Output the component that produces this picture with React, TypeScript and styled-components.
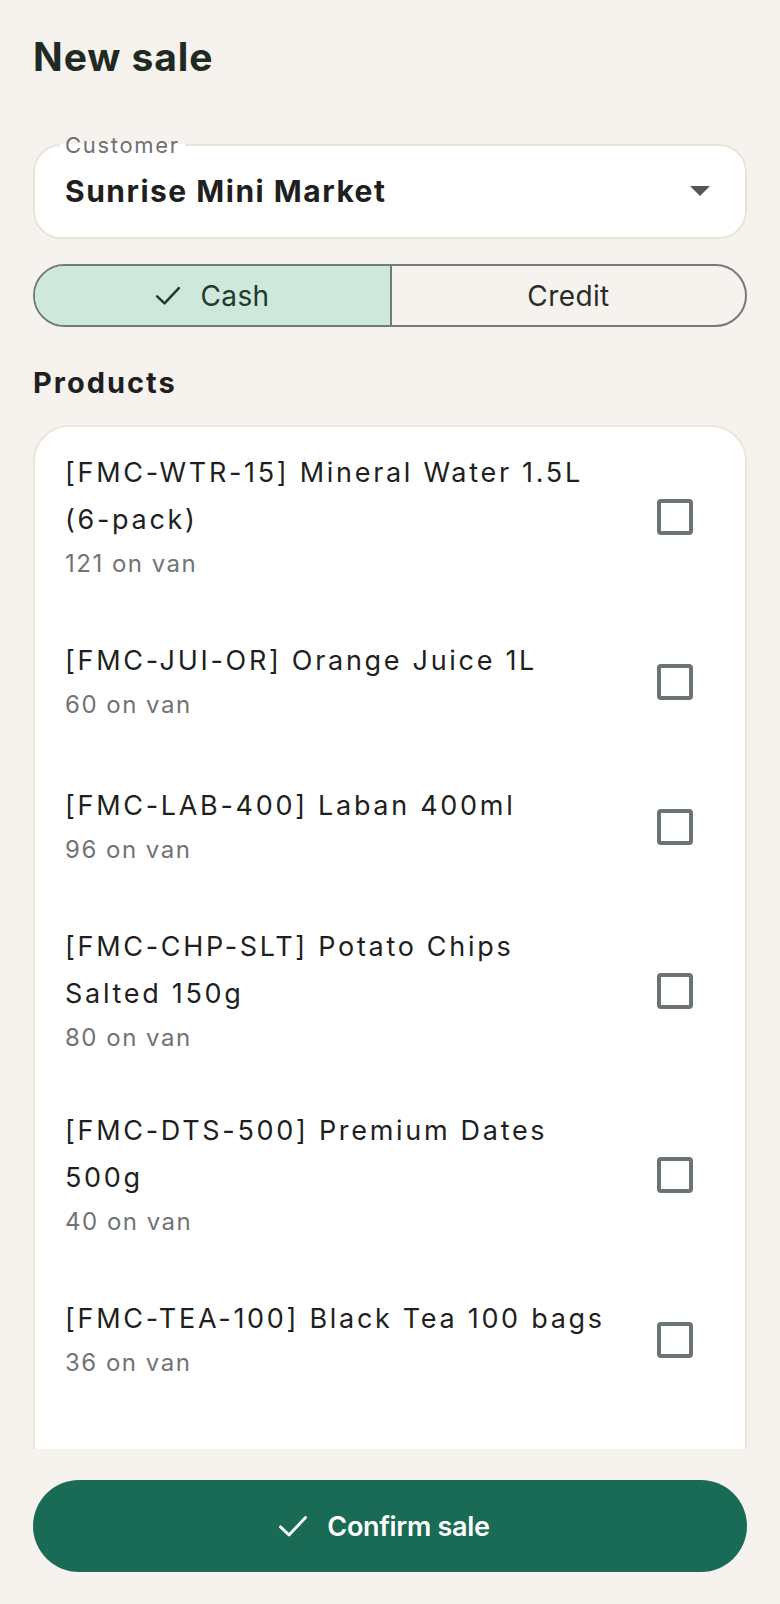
import React from 'react';
import styled, { createGlobalStyle } from 'styled-components';

const GlobalStyle = createGlobalStyle`
  html, body {
    margin: 0;
    padding: 0;
    background: #f6f3ee;
    font-family: Inter, "Noto Sans", sans-serif;
  }
  * { box-sizing: border-box; }
`;

const Page = styled.div`
  display: flex;
  flex-direction: column;
  height: 100vh;
  padding: 0 33px 32px;
  background: #f6f3ee;
`;

const Title = styled.h1`
  margin: 34px 0 0;
  font-size: 39px;
  line-height: 46px;
  font-weight: 700;
  letter-spacing: 0.9px;
  color: #1f2a22;
`;

const Field = styled.fieldset`
  margin: 55px 0 0;
  padding: 0 30px 10px;
  border: 2px solid #e9e3d8;
  border-radius: 28px;
  background: #fff;
`;

const FieldLabel = styled.legend`
  padding: 0 5px;
  margin-left: -5px;
  font-size: 22px;
  line-height: 20px;
  letter-spacing: 1.7px;
  color: #6d726e;
`;

const FieldRow = styled.div`
  height: 72px;
  display: flex;
  align-items: center;
  justify-content: space-between;
`;

const FieldValue = styled.div`
  font-size: 30px;
  font-weight: 700;
  letter-spacing: 1.5px;
  color: #1e1f1e;
`;

const Caret = styled.span`
  width: 0;
  height: 0;
  border-left: 10px solid transparent;
  border-right: 10px solid transparent;
  border-top: 10px solid #555;
  margin-right: 5px;
`;

const Segmented = styled.div`
  margin-top: 25px;
  display: grid;
  grid-template-columns: 1fr 1fr;
  height: 63px;
  border: 2px solid #727c76;
  border-radius: 999px;
  overflow: hidden;
`;

const Segment = styled.button<{ $active?: boolean }>`
  display: flex;
  align-items: center;
  justify-content: center;
  gap: 19px;
  border: none;
  border-left: ${(p) => (p.$active ? 'none' : '2px solid #727c76')};
  background: ${(p) => (p.$active ? '#cfe8dc' : 'transparent')};
  color: ${(p) => (p.$active ? '#24392e' : '#2a2c2b')};
  font-family: inherit;
  font-size: 28px;
  letter-spacing: 0.4px;
  padding: 0;
`;

const SectionTitle = styled.h2`
  margin: 39px 0 0;
  font-size: 29px;
  line-height: 34px;
  font-weight: 700;
  letter-spacing: 2px;
  color: #1e1f1e;
`;

const ListViewport = styled.div`
  flex: 1;
  min-height: 0;
  overflow: hidden;
  margin-top: 25px;
`;

const ListCard = styled.ul`
  margin: 0;
  padding: 0;
  list-style: none;
  background: #fff;
  border: 2px solid #ebe5da;
  border-radius: 36px;
`;

const Row = styled.li`
  display: flex;
  align-items: center;
  gap: 45px;
  min-height: 145px;
  padding: 22px 52px 26px 30px;
`;

const RowText = styled.div`
  flex: 1;
  min-width: 0;
`;

const RowTitle = styled.div`
  font-size: 27px;
  line-height: 47px;
  letter-spacing: 2.7px;
  color: #1e1f1e;
`;

const RowSub = styled.div`
  font-size: 24px;
  line-height: 42px;
  letter-spacing: 1.5px;
  color: #6f7571;
`;

const Checkbox = styled.span`
  flex: none;
  width: 36px;
  height: 36px;
  border: 4px solid #6b7470;
  border-radius: 4px;
`;

const Footer = styled.div`
  padding-top: 31px;
`;

const ConfirmButton = styled.button`
  width: 100%;
  height: 92px;
  border: none;
  border-radius: 46px;
  background: #1a6b55;
  color: #fff;
  display: flex;
  align-items: center;
  justify-content: center;
  gap: 19px;
  padding: 0 12px 0 0;
  font-family: inherit;
  font-size: 27px;
  font-weight: 600;
  letter-spacing: -0.3px;
`;

const Check = ({ color, width }: { color: string; width: number }) => (
  <svg width={width} height={(width * 18) / 24} viewBox="0 0 24 18" fill="none">
    <path d="M2 9.5l6.8 6.5L22 2" stroke={color} strokeWidth="2.3" strokeLinecap="round" strokeLinejoin="round" />
  </svg>
);

const products = [
  { name: '[FMC-WTR-15] Mineral Water 1.5L (6-pack)', stock: 121 },
  { name: '[FMC-JUI-OR] Orange Juice 1L', stock: 60 },
  { name: '[FMC-LAB-400] Laban 400ml', stock: 96 },
  { name: '[FMC-CHP-SLT] Potato Chips Salted 150g', stock: 80 },
  { name: '[FMC-DTS-500] Premium Dates 500g', stock: 40 },
  { name: '[FMC-TEA-100] Black Tea 100 bags', stock: 36 },
  { name: '[FMC-SGR-1KG] Sugar 1kg', stock: 52 },
  { name: '[FMC-RCE-5KG] Basmati Rice 5kg', stock: 24 },
];

export default function App() {
  return (
    <>
      <GlobalStyle />
      <Page>
        <Title>New sale</Title>
        <Field>
          <FieldLabel>Customer</FieldLabel>
          <FieldRow>
            <FieldValue>Sunrise Mini Market</FieldValue>
            <Caret />
          </FieldRow>
        </Field>
        <Segmented>
          <Segment $active>
            <Check color="#24392e" width={26} />
            Cash
          </Segment>
          <Segment>Credit</Segment>
        </Segmented>
        <SectionTitle>Products</SectionTitle>
        <ListViewport>
          <ListCard>
            {products.map((p) => (
              <Row key={p.name}>
                <RowText>
                  <RowTitle>{p.name}</RowTitle>
                  <RowSub>{p.stock} on van</RowSub>
                </RowText>
                <Checkbox />
              </Row>
            ))}
          </ListCard>
        </ListViewport>
        <Footer>
          <ConfirmButton>
            <Check color="#fff" width={30} />
            Confirm sale
          </ConfirmButton>
        </Footer>
      </Page>
    </>
  );
}
